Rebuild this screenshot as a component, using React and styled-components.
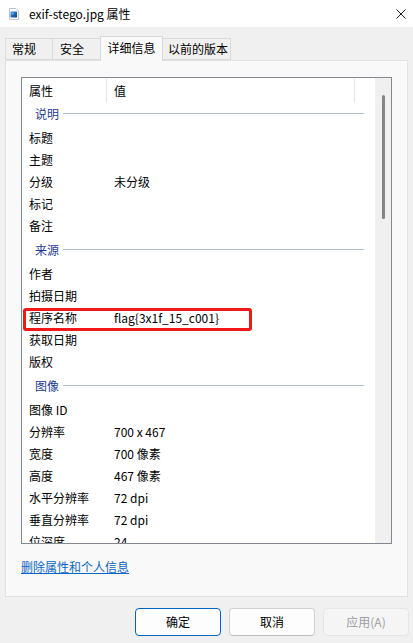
import React from "react";
import styled, { createGlobalStyle } from "styled-components";

const GlobalStyle = createGlobalStyle`
  html, body { margin: 0; padding: 0; }
  body {
    background: #f0f0f0;
    font-family: "Noto Sans CJK SC", "Noto Sans", sans-serif;
    font-size: 12px;
    color: #000;
  }
  #root { width: 413px; height: 643px; overflow: hidden; }
`;

const Window = styled.div`
  width: 413px;
  height: 643px;
  display: flex;
  flex-direction: column;
  background: #f0f0f0;
`;

const TitleBar = styled.div`
  height: 27px;
  background: #fff;
  display: flex;
  align-items: center;
  padding-left: 9px;
  box-sizing: border-box;
`;

const TitleText = styled.span`
  margin-left: 10px;
  font-size: 12px;
  line-height: 16px;
  color: #000;
`;

const CloseBtn = styled.div`
  margin-left: auto;
  width: 30px;
  height: 27px;
  display: flex;
  align-items: center;
  justify-content: center;
  margin-right: -3px;
`;

const Body = styled.div`
  padding: 9px 5px 0 5px;
  display: flex;
  flex-direction: column;
`;

const TabStrip = styled.div`
  display: flex;
  align-items: flex-end;
  height: 24px;
  padding-left: 1px;
  position: relative;
  z-index: 1;
`;

const Tab = styled.div`
  box-sizing: border-box;
  width: ${(p) => p.$w}px;
  height: ${(p) => (p.$active ? 25 : 22)}px;
  margin-bottom: ${(p) => (p.$active ? -1 : 0)}px;
  padding-left: ${(p) => p.$pl}px;
  padding-bottom: ${(p) => (p.$active ? 2 : 0)}px;
  display: flex;
  align-items: center;
  background: ${(p) => (p.$active ? "#f9f9f9" : "#f0f0f0")};
  border: 1px solid #dadada;
  border-bottom: ${(p) => (p.$active ? "none" : "1px solid #dadada")};
  margin-left: -1px;
  font-size: 12px;
  line-height: 16px;
  white-space: nowrap;
`;

const Panel = styled.div`
  box-sizing: border-box;
  width: 403px;
  height: 537px;
  background: #f9f9f9;
  border: 1px solid #e2e2e2;
  padding: 16px 0 0 15px;
  display: flex;
  flex-direction: column;
`;

const ListBox = styled.div`
  box-sizing: border-box;
  width: 371px;
  height: 467px;
  border: 1px solid #828790;
  background: #fff;
  display: grid;
  grid-template-columns: 1fr 16px;
  overflow: hidden;
`;

const ListContent = styled.div`
  overflow: hidden;
  position: relative;
`;

const HeaderRow = styled.div`
  display: grid;
  grid-template-columns: 85px 248px 1fr;
  height: 22px;
  padding-top: 1px;
`;

const HeaderCell = styled.div`
  border-right: ${(p) => (p.$last ? "none" : "1px solid #e5e5e5")};
  padding-left: 7px;
  display: flex;
  align-items: center;
  font-size: 12px;
  line-height: 16px;
  height: 24px;
`;

const GroupRow = styled.div`
  height: 26px;
  display: flex;
  align-items: center;
  padding: 0 11px 1px 13px;
  box-sizing: border-box;
`;

const GroupLabel = styled.span`
  color: #1e3a96;
  font-size: 12px;
  line-height: 16px;
`;

const GroupLine = styled.div`
  flex: 1;
  height: 1px;
  background: #b3bfd6;
  margin-left: 4px;
`;

const ItemRow = styled.div`
  position: relative;
  height: 22px;
  display: grid;
  grid-template-columns: 85px 1fr;
  align-items: center;
`;

const Cell = styled.span`
  padding-left: 7px;
  font-size: 12px;
  line-height: 16px;
  white-space: nowrap;
  color: #000;
`;

const Highlight = styled.div`
  position: absolute;
  left: 1px;
  top: 1px;
  width: 229px;
  height: 23px;
  box-sizing: border-box;
  border: 3px solid #f01818;
  border-radius: 3px;
  pointer-events: none;
`;

const ScrollTrack = styled.div`
  background: #f0f0f0;
  display: flex;
  justify-content: center;
  padding-top: 17px;
`;

const ScrollThumb = styled.div`
  width: 3px;
  height: 124px;
  border-radius: 2px;
  background: #858585;
`;

const LinkText = styled.a`
  margin-top: 15px;
  align-self: flex-start;
  color: #0a66c8;
  text-decoration: underline;
  font-size: 12px;
  line-height: 16px;
  cursor: pointer;
`;

const ButtonRow = styled.div`
  display: flex;
  justify-content: flex-end;
  gap: 8px;
  padding-top: 11px;
  margin-right: -1px;
`;

const Button = styled.div`
  box-sizing: border-box;
  width: 86px;
  height: 28px;
  border-radius: 4px;
  display: flex;
  align-items: center;
  justify-content: center;
  font-size: 12px;
  line-height: 16px;
  background: ${(p) => (p.$disabled ? "#f5f5f5" : "#fdfdfd")};
  color: ${(p) => (p.$disabled ? "#9d9d9d" : "#000")};
  border: 1px solid
    ${(p) => (p.$primary ? "#0067c0" : p.$disabled ? "#e6e6e6" : "#d0d0d0")};
  border-bottom-color: ${(p) =>
    p.$primary ? "#0067c0" : p.$disabled ? "#e6e6e6" : "#bdbdbd"};
`;

const FileIcon = () => (
  <svg width="10" height="12" viewBox="0 0 10 12">
    <defs>
      <linearGradient id="pic" x1="0" y1="0" x2="1" y2="1">
        <stop offset="0" stopColor="#3a8fe0" />
        <stop offset="1" stopColor="#0b3f8f" />
      </linearGradient>
    </defs>
    <path d="M0.5 0.5 H7 L9.5 3 V11.5 H0.5 Z" fill="#fff" stroke="#b8c4d2" />
    <rect x="1.5" y="3.5" width="6.5" height="6" fill="url(#pic)" />
    <rect x="2.5" y="4.5" width="2" height="2" fill="#7fc1f5" opacity="0.8" />
  </svg>
);

const CloseIcon = () => (
  <svg width="10" height="10" viewBox="0 0 10 10">
    <path d="M0.5 0.5 L9.5 9.5 M9.5 0.5 L0.5 9.5" stroke="#1a1a1a" strokeWidth="1" />
  </svg>
);

const groups = [
  {
    title: "说明",
    items: [
      ["标题", ""],
      ["主题", ""],
      ["分级", "未分级"],
      ["标记", ""],
      ["备注", ""],
    ],
  },
  {
    title: "来源",
    items: [
      ["作者", ""],
      ["拍摄日期", ""],
      ["程序名称", "flag{3x1f_15_c001}", true],
      ["获取日期", ""],
      ["版权", ""],
    ],
  },
  {
    title: "图像",
    items: [
      ["图像 ID", ""],
      ["分辨率", "700 x 467"],
      ["宽度", "700 像素"],
      ["高度", "467 像素"],
      ["水平分辨率", "72 dpi"],
      ["垂直分辨率", "72 dpi"],
      ["位深度", "24"],
    ],
  },
];

const tabs = [
  { label: "常规", w: 48, pl: 6 },
  { label: "安全", w: 48.5, pl: 7 },
  { label: "详细信息", w: 63.5, pl: 7, active: true },
  { label: "以前的版本", w: 69, pl: 5 },
];

export default function App() {
  return (
    <>
      <GlobalStyle />
      <Window>
        <TitleBar>
          <FileIcon />
          <TitleText>exif-stego.jpg 属性</TitleText>
          <CloseBtn>
            <CloseIcon />
          </CloseBtn>
        </TitleBar>
        <Body>
          <TabStrip>
            {tabs.map((t) => (
              <Tab key={t.label} $w={t.w} $pl={t.pl} $active={t.active}>
                {t.label}
              </Tab>
            ))}
          </TabStrip>
          <Panel>
            <ListBox>
              <ListContent>
                <HeaderRow>
                  <HeaderCell>属性</HeaderCell>
                  <HeaderCell>值</HeaderCell>
                  <HeaderCell $last />
                </HeaderRow>
                {groups.map((g) => (
                  <React.Fragment key={g.title}>
                    <GroupRow>
                      <GroupLabel>{g.title}</GroupLabel>
                      <GroupLine />
                    </GroupRow>
                    {g.items.map(([k, v, hl]) => (
                      <ItemRow key={k}>
                        <Cell>{k}</Cell>
                        <Cell>{v}</Cell>
                        {hl && <Highlight />}
                      </ItemRow>
                    ))}
                  </React.Fragment>
                ))}
              </ListContent>
              <ScrollTrack>
                <ScrollThumb />
              </ScrollTrack>
            </ListBox>
            <LinkText>删除属性和个人信息</LinkText>
          </Panel>
          <ButtonRow>
            <Button $primary>确定</Button>
            <Button>取消</Button>
            <Button $disabled>应用(A)</Button>
          </ButtonRow>
        </Body>
      </Window>
    </>
  );
}
